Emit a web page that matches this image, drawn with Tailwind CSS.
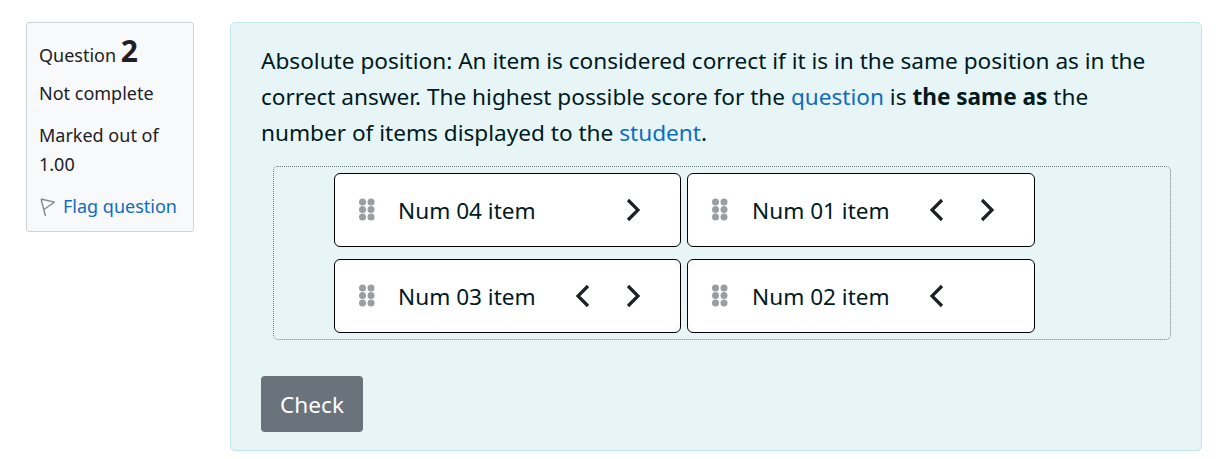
<!DOCTYPE html>
<html lang="en">
<head>
  <meta charset="UTF-8" />
  <title>Question 2</title>
  <script src="https://cdn.jsdelivr.net/npm/@tailwindcss/browser@4"></script>
</head>

<body class="bg-white text-[#1d2125] font-['Noto_Sans',sans-serif] h-[459px] overflow-hidden">
  <div class="flex items-start pt-[22px] pl-[26px]">
    <!-- Question info -->
    <div class="w-[168px] h-[210px] shrink-0 bg-[#f8f9fa] border border-[#ced4da] rounded-[3px] pl-[12px] pt-[10px] text-[18px]">
      <h3 class="h-[36px] leading-[36px] whitespace-nowrap">Question <span class="text-[30px] font-bold">2</span></h3>
      <p class="mt-[11px] leading-[27px]">Not complete</p>
      <p class="mt-[14px] leading-[29px]">Marked out of 1.00</p>
      <a class="mt-[14px] flex items-center gap-[8px] leading-[27px] text-[#0f6cbf] whitespace-nowrap">
        <svg class="w-[16px] h-[20px]" viewBox="0 0 16 20" fill="none" stroke="#8a8a8a" stroke-width="1.4"><path d="M2 2 L6.5 19 M2 2 L15.5 5 L5 12.5"/></svg>
        Flag question
      </a>
    </div>

    <!-- Question content -->
    <div class="ml-[36px] w-[972px] h-[429px] shrink-0 bg-[#e7f5f6] border border-[#bfe6ea] rounded-[5px] pl-[30px] pr-[30px] pt-[20px]">
      <p class="text-[22.6px] leading-[36px] text-[#001a1e]">Absolute position: An item is considered correct if it is in the same position as in the correct answer. The highest possible score for the <a class="text-[#0f6cbf]">question</a> is <strong class="font-bold">the same as</strong> the number of items displayed to the <a class="text-[#0f6cbf]">student</a>.</p>

      <div class="mt-[15px] ml-[12px] w-[898px] h-[174px] border border-dotted border-[#6a7a7c] rounded-[5px] pt-[6px] pl-[60px]">
        <div class="grid grid-cols-[347px_348px] gap-x-[6px] gap-y-[12px] text-[22.6px] leading-none text-[#001a1e]">
          <div class="h-[74px] bg-white border border-black rounded-[6px] flex items-center">
            <svg class="ml-[23px] w-[18px] h-[24px] mb-[2px]" viewBox="0 0 18 24" fill="#999fa1"><circle cx="4.5" cy="5" r="3.5"/><circle cx="13" cy="5" r="3.5"/><circle cx="4.5" cy="12.5" r="3.5"/><circle cx="13" cy="12.5" r="3.5"/><circle cx="4.5" cy="20" r="3.5"/><circle cx="13" cy="20" r="3.5"/></svg>
            <span class="ml-[22px] w-[178px] mt-[3px] whitespace-nowrap">Num 04 item</span>
            <span class="w-[50px]"></span>
            <svg class="w-[14px] h-[24px]" viewBox="0 0 14 24" fill="none" stroke="#1d2125" stroke-width="3.2"><path d="M2 2 L12 12 L2 22"/></svg>
          </div>
          <div class="h-[74px] bg-white border border-black rounded-[6px] flex items-center">
            <svg class="ml-[23px] w-[18px] h-[24px] mb-[2px]" viewBox="0 0 18 24" fill="#999fa1"><circle cx="4.5" cy="5" r="3.5"/><circle cx="13" cy="5" r="3.5"/><circle cx="4.5" cy="12.5" r="3.5"/><circle cx="13" cy="12.5" r="3.5"/><circle cx="4.5" cy="20" r="3.5"/><circle cx="13" cy="20" r="3.5"/></svg>
            <span class="ml-[23px] w-[178px] mt-[3px] whitespace-nowrap">Num 01 item</span>
            <svg class="w-[14px] h-[24px]" viewBox="0 0 14 24" fill="none" stroke="#1d2125" stroke-width="3.2"><path d="M12 2 L2 12 L12 22"/></svg>
            <svg class="ml-[36px] w-[14px] h-[24px]" viewBox="0 0 14 24" fill="none" stroke="#1d2125" stroke-width="3.2"><path d="M2 2 L12 12 L2 22"/></svg>
          </div>
          <div class="h-[74px] bg-white border border-black rounded-[6px] flex items-center">
            <svg class="ml-[23px] w-[18px] h-[24px] mb-[2px]" viewBox="0 0 18 24" fill="#999fa1"><circle cx="4.5" cy="5" r="3.5"/><circle cx="13" cy="5" r="3.5"/><circle cx="4.5" cy="12.5" r="3.5"/><circle cx="13" cy="12.5" r="3.5"/><circle cx="4.5" cy="20" r="3.5"/><circle cx="13" cy="20" r="3.5"/></svg>
            <span class="ml-[22px] w-[178px] mt-[3px] whitespace-nowrap">Num 03 item</span>
            <svg class="w-[14px] h-[24px]" viewBox="0 0 14 24" fill="none" stroke="#1d2125" stroke-width="3.2"><path d="M12 2 L2 12 L12 22"/></svg>
            <svg class="ml-[36px] w-[14px] h-[24px]" viewBox="0 0 14 24" fill="none" stroke="#1d2125" stroke-width="3.2"><path d="M2 2 L12 12 L2 22"/></svg>
          </div>
          <div class="h-[74px] bg-white border border-black rounded-[6px] flex items-center">
            <svg class="ml-[23px] w-[18px] h-[24px] mb-[2px]" viewBox="0 0 18 24" fill="#999fa1"><circle cx="4.5" cy="5" r="3.5"/><circle cx="13" cy="5" r="3.5"/><circle cx="4.5" cy="12.5" r="3.5"/><circle cx="13" cy="12.5" r="3.5"/><circle cx="4.5" cy="20" r="3.5"/><circle cx="13" cy="20" r="3.5"/></svg>
            <span class="ml-[23px] w-[178px] mt-[3px] whitespace-nowrap">Num 02 item</span>
            <svg class="w-[14px] h-[24px]" viewBox="0 0 14 24" fill="none" stroke="#1d2125" stroke-width="3.2"><path d="M12 2 L2 12 L12 22"/></svg>
          </div>
        </div>
      </div>

      <button class="mt-[36px] pt-[2px] block w-[102px] h-[56px] bg-[#6a737b] text-white text-[22.6px] rounded-[4px]">Check</button>
    </div>
  </div>
</body>
</html>
